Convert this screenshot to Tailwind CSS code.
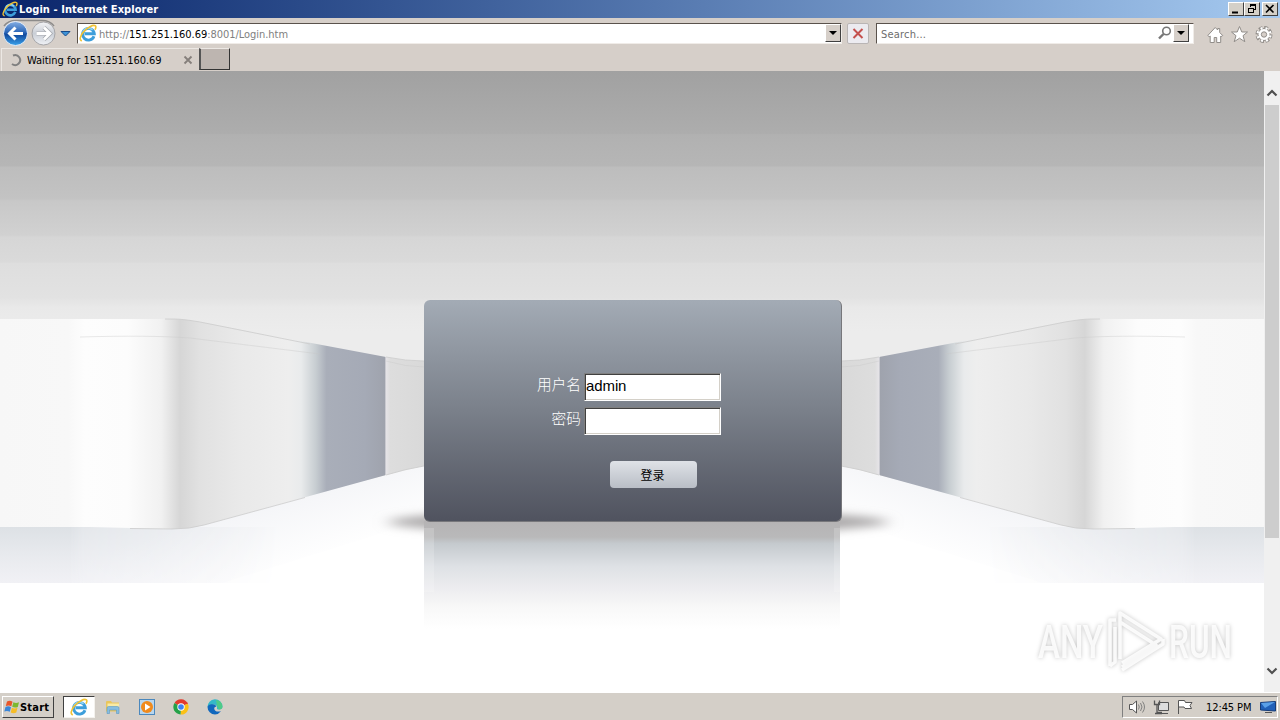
<!DOCTYPE html>
<html lang="zh">
<head>
    <meta charset="UTF-8">
    <meta name="viewport" content="width=device-width, initial-scale=1.0">
    <title>Login</title>
    <script src="https://cdn.jsdelivr.net/npm/@tailwindcss/browser@4"></script>
</head>
<body class="w-[1280px] h-[720px] overflow-hidden flex flex-col bg-[#d4d0c8] text-[11px] leading-none text-black font-['DejaVu_Sans_Condensed','Noto_Sans_CJK_SC',sans-serif]">

    <svg class="hidden">
        <symbol id="ie" viewBox="0 0 16 16">
            <path d="M13.300 10.900A5.200 5.200 0 1 1 13.600 8.700H5" fill="none" stroke="#3d9edb" stroke-width="2.600"/>
            <path d="M3.600 7.200A5 5 0 0 1 12 5.200" fill="none" stroke="#8dd2f5" stroke-width="1.500"/>
            <path d="M2.600 14.800C.2 14.600.6 10.800 4 7S12.400.4 14.400 1.500c1 .7.6 2.200-.2 3.600" fill="none" stroke="#f0c234" stroke-width="1.400"/>
        </symbol>
    </svg>

    <!-- title bar -->
    <header class="h-[18px] shrink-0 flex items-center pl-[2px] pr-[2px] bg-linear-to-r from-[#0a246a] to-[#a6caf0]">
        <svg class="w-4 h-4"><use href="#ie"/></svg>
        <h1 class="ml-px grow text-white font-bold text-[11px] tracking-[0.07px] whitespace-nowrap">Login - Internet Explorer</h1>
        <div class="flex">
            <span class="w-4 h-[14px] bg-[#d4d0c8] border border-t-white border-l-white border-b-[#404040] border-r-[#404040]">
                <svg class="w-[14px] h-3"><path d="M3 8.500h6v2H3z"/></svg>
            </span>
            <span class="w-4 h-[14px] bg-[#d4d0c8] border border-t-white border-l-white border-b-[#404040] border-r-[#404040]">
                <svg class="w-[14px] h-3" shape-rendering="crispEdges" fill="none" stroke="#000"><path d="M5.500 4V1.500h5v5H9M5 2h6M3.500 5.500h5v4h-5zM3 5h6"/></svg>
            </span>
            <span class="ml-[2px] w-4 h-[14px] bg-[#d4d0c8] border border-t-white border-l-white border-b-[#404040] border-r-[#404040]">
                <svg class="w-[14px] h-3" fill="none" stroke="#000" stroke-width="1.600"><path d="M3 2l7.500 7.500M10.500 2L3 9.500"/></svg>
            </span>
        </div>
    </header>

    <!-- address bar -->
    <nav class="h-[30px] shrink-0 flex items-center bg-[#d6cfc9]">
        <svg class="w-[77px] h-[30px] shrink-0">
            <defs>
                <linearGradient id="back" x1="0" y1="0" x2="0" y2="1">
                    <stop offset="0" stop-color="#86afe4"/><stop offset=".45" stop-color="#2b66b8"/><stop offset=".55" stop-color="#124a9e"/><stop offset="1" stop-color="#3ba4ec"/>
                </linearGradient>
                <linearGradient id="fwd" x1="0" y1="0" x2="0" y2="1">
                    <stop offset="0" stop-color="#f4f4f6"/><stop offset=".5" stop-color="#c9ced6"/><stop offset="1" stop-color="#f0f2f6"/>
                </linearGradient>
            </defs>
            <path d="M4 8Q8 2.500 16 2.500H42q8 0 12 5.500" fill="none" stroke="#8d8b8a" stroke-width="1.500"/>
            <circle cx="15.500" cy="15.500" r="12" fill="url(#back)" stroke="#e9eef6"/>
            <circle cx="43.500" cy="15.500" r="11.500" fill="url(#fwd)" stroke="#a5a5a8"/>
            <path d="M23 15.500H10M15.500 9.500l-6 6 6 6" fill="none" stroke="#fff" stroke-width="3"/>
            <path d="M36.500 15.500h13M44 9.500l6 6-6 6" fill="none" stroke="#a5a8ae" stroke-width="4.200"/>
            <path d="M36.500 15.500h13M44 9.500l6 6-6 6" fill="none" stroke="#fff" stroke-width="2.800"/>
            <path d="M61 13.500h9L65.500 18z" fill="#3c93d8" stroke="#164a8a"/>
        </svg>
        <div class="w-[765px] h-[21px] flex items-center bg-white border border-t-[#5a524c] border-l-[#5a524c] border-b-[#f0ece8] border-r-[#f0ece8] pl-px">
            <svg class="w-[18px] h-[18px]"><use href="#ie"/></svg>
            <p class="ml-[2px] grow text-[#808080] tracking-[-0.04px] whitespace-nowrap pt-[2px]">http://<span class="text-black">151.251.160.69</span>:8001/Login.htm</p>
            <span class="w-4 h-[18px] bg-[#d6cfc9] border border-t-white border-l-white border-b-[#404040] border-r-[#404040]">
                <svg class="w-[14px] h-4"><path d="M3 6h8l-4 4z"/></svg>
            </span>
        </div>
        <span class="ml-[5px] w-[22px] h-[21px] rounded-xs border border-[#b9b5b5] bg-[#ecebf0]">
            <svg class="w-5 h-[19px]" fill="none" stroke="#c4504e" stroke-width="2"><path d="M5.500 5l9 9M14.500 5l-9 9"/></svg>
        </span>
        <div class="ml-[7px] w-[318px] h-[21px] flex items-center bg-white border border-t-[#5a524c] border-l-[#5a524c] border-b-[#f0ece8] border-r-[#f0ece8] pl-1 pr-1">
            <p class="grow text-[#6d6d6d] tracking-[0.2px] pt-[2px]">Search...</p>
            <svg class="w-4 h-4" fill="none" stroke="#777"><circle cx="9.500" cy="6" r="3.800" stroke-width="1.600"/><path d="M6.500 9L2 13.500" stroke-width="2.400"/></svg>
            <span class="w-4 h-[18px] bg-[#d6cfc9] border border-t-white border-l-white border-b-[#404040] border-r-[#404040]">
                <svg class="w-[14px] h-4"><path d="M3 6h8l-4 4z"/></svg>
            </span>
        </div>
        <svg class="ml-[10px] w-[74px] h-[30px] shrink-0" fill="#fff" stroke="#918d89">
            <path d="M3.800 17.500l7.400-8 2.500 2.500v-1.500h2v4l3 3-1.500 1-.5-.5v6.500h-4v-5h-2.500v5h-4V18l-1 .7z"/>
            <path d="M35.500 8.500l2.300 5.500h5.700l-4.500 3.700 1.800 6-5.300-3.500-5.300 3.500 1.800-6-4.500-3.700h5.700z"/>
            <g id="gear">
                <circle cx="60" cy="16.500" r="6.700" fill="none" stroke-width="3.600" stroke-dasharray="3.600 1.662"/>
                <circle cx="60" cy="16.500" r="6"/>
                <circle cx="60" cy="16.500" r="6.500" fill="none" stroke="#fff" stroke-width="2.200" stroke-dasharray="2 3.105" stroke-dashoffset="-.8"/>
                <circle cx="60" cy="16.500" r="2.700" fill="#d6cfc9"/>
            </g>
        </svg>
    </nav>

    <!-- tabs -->
    <div class="h-[23px] shrink-0 flex bg-[#d6cfc9]">
        <div class="ml-px w-[198px] flex items-center border-l border-t border-[#ece8e4] pl-[6px]">
            <svg class="w-4 h-4" fill="none" stroke="#808080" stroke-width="2"><path d="M5 3.500A5 5 0 1 1 4 12"/></svg>
            <p class="ml-[3px] grow whitespace-nowrap tracking-[-0.04px]">Waiting for 151.251.160.69</p>
            <svg class="w-[10px] h-[10px] mr-[6px]" fill="none" stroke="#857f7b" stroke-width="1.800"><path d="M1.500 1.500l7 7M8.500 1.500l-7 7"/></svg>
        </div>
        <span class="w-[31px] h-[22px] bg-[#bdb5b0] border border-t-[#ece8e4] border-l-2 border-l-[#555] border-b-[#333] border-r-[#333]"></span>
    </div>

    <main class="h-[621px] shrink-0 flex">
        <div class="relative w-[1264px] h-full bg-white">
            <!-- room backdrop -->
            <svg class="absolute inset-0" width="1264" height="621" viewBox="0 71 1264 621">
                <defs>
                    <linearGradient id="sky" gradientUnits="userSpaceOnUse" x1="0" y1="71" x2="0" y2="331">
                        <stop offset="0" stop-color="#a1a1a1"/><stop offset=".24" stop-color="#adadad"/>
                        <stop offset=".245" stop-color="#b1b1b1"/><stop offset=".365" stop-color="#b6b6b6"/>
                        <stop offset=".37" stop-color="#bdbdbd"/><stop offset=".49" stop-color="#c3c3c3"/>
                        <stop offset=".5" stop-color="#c8c8c8"/><stop offset=".63" stop-color="#d1d1d1"/>
                        <stop offset=".64" stop-color="#d6d6d6"/><stop offset=".735" stop-color="#dadada"/>
                        <stop offset=".74" stop-color="#dedede"/><stop offset=".87" stop-color="#e2e2e2"/>
                        <stop offset=".91" stop-color="#e9e9e9"/><stop offset="1" stop-color="#ececec"/>
                    </linearGradient>
                    <linearGradient id="wall" gradientUnits="userSpaceOnUse" x1="0" y1="0" x2="424" y2="0">
                        <stop offset="0" stop-color="#f7f7f7"/><stop offset=".16" stop-color="#f8f8f8"/>
                        <stop offset=".2" stop-color="#fdfdfd"/><stop offset=".3" stop-color="#fcfcfc"/>
                        <stop offset=".38" stop-color="#f1f1f1"/><stop offset=".425" stop-color="#d6d6d6"/>
                        <stop offset=".47" stop-color="#e1e1e1"/><stop offset=".56" stop-color="#e9e9e9"/>
                        <stop offset=".68" stop-color="#eeeeee"/><stop offset=".71" stop-color="#e9ebec"/>
                        <stop offset=".745" stop-color="#c7cdd1"/><stop offset=".77" stop-color="#a9aeb9"/>
                        <stop offset=".86" stop-color="#a5aab6"/><stop offset=".908" stop-color="#9fa3ad"/>
                        <stop offset=".91" stop-color="#e6e4e8"/><stop offset=".92" stop-color="#dddddd"/>
                        <stop offset="1" stop-color="#d9d9d9"/>
                    </linearGradient>
                    <linearGradient id="floor" gradientUnits="userSpaceOnUse" x1="180" y1="527" x2="205" y2="600">
                        <stop offset="0" stop-color="#f3f4f7"/><stop offset="1" stop-color="#f3f4f7" stop-opacity="0"/>
                    </linearGradient>
                    <linearGradient id="floorEdge" gradientUnits="userSpaceOnUse" x1="0" y1="527" x2="0" y2="583">
                        <stop offset="0" stop-color="#dde1e5"/><stop offset=".5" stop-color="#e8eaee"/><stop offset="1" stop-color="#f1f1f5"/>
                    </linearGradient>
                    <linearGradient id="fade" x1="0" y1="0" x2="1" y2="0">
                        <stop offset="0" stop-color="#fff"/><stop offset=".25" stop-color="#fff"/><stop offset=".3" stop-color="#aaa"/><stop offset="1" stop-color="#000"/>
                    </linearGradient>
                    <mask id="edgeMask" maskUnits="userSpaceOnUse" x="0" y="520" width="280" height="70">
                        <rect x="0" y="520" width="280" height="70" fill="url(#fade)"/>
                    </mask>
                    <linearGradient id="mirror" x1="0" y1="0" x2="0" y2="1">
                        <stop offset="0" stop-color="#b5b3b4"/><stop offset=".15" stop-color="#b9b9ba"/>
                        <stop offset=".21" stop-color="#c5cace"/><stop offset=".42" stop-color="#dee1e5"/>
                        <stop offset=".6" stop-color="#ebebee"/><stop offset=".8" stop-color="#f8f8f8"/><stop offset="1" stop-color="#fff"/>
                    </linearGradient>
                    <filter id="soft" x="-20%" y="-80%" width="140%" height="260%"><feGaussianBlur stdDeviation="8 5"/></filter>
                    <g id="side">
                        <path d="M0 527H180L424 466V520L200 590H0z" fill="url(#floor)"/>
                        <path d="M0 527H280V583H0z" fill="url(#floorEdge)" mask="url(#edgeMask)"/>
                        <path d="M0 583H280V600H0z" fill="#fff"/>
                        <path d="M0 319H174Q183 319 200 322L386 357Q406 361 424 361V466Q405 469 386 475L204 525Q190 529 172 529L90 527H0z" fill="url(#wall)"/>
                        <path d="M165 319H174Q183 319 200 322L310 344M386 357Q406 361 424 361M386 475Q405 469 424 466M305 497.500L204 525Q190 529 172 529L130 528.500" fill="none" stroke="#cbcbcb" stroke-width=".8"/>
                        <path d="M80 337Q150 335 190 338L320 354M386 361Q406 367 424 367" fill="none" stroke="#c9c9c9" stroke-width=".8" opacity=".5"/>
                    </g>
                </defs>
                <rect x="0" y="71" width="1264" height="420" fill="url(#sky)"/>
                <path d="M0 527H180L424 466H842L1084 527H1264V692H0z" fill="#fff"/>
                <use href="#side"/>
                <use href="#side" transform="translate(1265 0) scale(-1 1)"/>
                <ellipse cx="638" cy="522" rx="250" ry="12" fill="#aaa8a9" filter="url(#soft)"/>
                <rect x="424" y="521" width="416" height="108" fill="url(#mirror)"/>
                <path d="M424 528h10v64h-10zM834 528h6v64h-6z" fill="#fff" opacity=".18"/>
            </svg>

            <!-- login panel -->
            <form id="login" class="absolute left-[424px] top-[229px] w-[418px] h-[222px] rounded-md border-r border-b border-[#77777b] bg-linear-to-b from-[#a3abb5] via-[#7a808a] to-[#50535f] pt-[73px] text-white font-['Liberation_Sans','Noto_Sans_CJK_SC',sans-serif]">
                <div class="flex items-center h-7">
                    <label for="user" class="w-[157px] text-right text-[14.7px] font-light pb-[3px]">用户名</label>
                    <input id="user" type="text" value="admin" class="ml-[3px] w-[137px] h-7 pl-px pb-[3px] bg-white text-black text-[15px] tracking-[-0.1px] border border-t-[#808080] border-l-[#808080] border-b-white border-r-white shadow-[inset_1px_1px_#404040,inset_-1px_-1px_#d4d0c8]">
                </div>
                <div class="mt-[6px] flex items-center h-7">
                    <label for="pass" class="w-[157px] text-right text-[14.7px] font-light pb-[3px]">密码</label>
                    <input id="pass" type="password" class="ml-[3px] w-[137px] h-7 bg-white text-black border border-t-[#808080] border-l-[#808080] border-b-white border-r-white shadow-[inset_1px_1px_#404040,inset_-1px_-1px_#d4d0c8]">
                </div>
                <button type="button" class="mt-[26px] ml-[186px] w-[87px] h-[27px] rounded bg-linear-to-b from-[#dfe2e7] to-[#b9bec6] text-black text-xs pr-[2px] pt-[2px]">登录</button>
            </form>

            <!-- watermark -->
            <svg class="absolute left-[1037px] top-[537px] w-[210px] h-[66px] overflow-visible drop-shadow-[0_0_2px_#00000044]">
                <g fill="none" stroke="#fff" stroke-opacity=".85" stroke-width="3.500" stroke-linejoin="round">
                    <path d="M83 51V5L124 31 85 55M83 14L119 37 85 59M73 58V12h6M73 58l5-4V19M85 62L126 36V31"/>
                </g>
                <g fill="#fff" fill-opacity=".85" font-family="Roboto" font-weight="500" font-size="46">
                    <text x="1" y="50" textLength="65" lengthAdjust="spacingAndGlyphs">ANY</text>
                    <text x="132" y="50" textLength="63" lengthAdjust="spacingAndGlyphs">RUN</text>
                </g>
            </svg>
        </div>

        <!-- scrollbar -->
        <div class="w-4 h-full flex flex-col items-center bg-[#f0f0f0] pt-[13px] pb-[13px]">
            <svg class="w-4 h-[21px] shrink-0" fill="none" stroke="#505050" stroke-width="2.200"><path d="M3.500 11.500L8 7l4.500 4.500"/></svg>
            <span class="w-[14px] h-[433px] bg-[#cdcdcd]"></span>
            <svg class="mt-auto w-4 h-4 shrink-0" fill="none" stroke="#505050" stroke-width="2.200"><path d="M3.500 5.500L8 10l4.500-4.500"/></svg>
        </div>
    </main>

    <!-- taskbar -->
    <footer class="h-7 shrink-0 flex items-center bg-[#d4cfc8] border-t border-white pl-[2px] pr-[2px]">
        <button class="w-[52px] h-[22px] flex items-center pl-px border border-t-white border-l-white border-b-[#404040] border-r-[#404040] font-bold text-[11px]">
            <svg class="w-4 h-4 shrink-0">
                <path d="M3 2.500q3-1.500 5.500.2L7.300 7.300Q5 5.800 1.800 7z" fill="#e8562a"/>
                <path d="M9.400 3.200q2.600 1.400 5.600 0L13.800 8q-3 1.200-5.600-.2z" fill="#7cb82f"/>
                <path d="M1.500 8q3-1.400 5.500.2L5.800 12.800q-2.600-1.500-5.500-.3z" fill="#3a86d8"/>
                <path d="M7.900 8.800q2.600 1.400 5.600 0l-1.200 4.800q-3 1.200-5.600-.2z" fill="#f6bd27"/>
            </svg>
            <span class="tracking-[0.2px] pt-px">Start</span>
        </button>
        <span class="ml-[9px] w-8 h-[22px] flex items-center justify-center bg-white border border-t-[#404040] border-l-[#404040] border-b-[#f4f2ee] border-r-[#f4f2ee]">
            <svg class="w-[18px] h-[18px]"><use href="#ie"/></svg>
        </span>
        <svg class="ml-[10px] w-4 h-4">
            <path d="M1 3q0-1 1-1h4l1 1.500h7v9H1z" fill="#e9c65c"/><path d="M2.500 4.500H14V8H2.500z" fill="#f8eaa6"/>
            <path d="M2 14.500V9q0-1.500 1.500-1.500h9Q14 7.500 14 9v5.500h-2.500V11h-7v3.500z" fill="#86bde0" stroke="#5a98c4" stroke-width=".6"/>
        </svg>
        <svg class="ml-[18px] w-4 h-4">
            <rect x=".5" y=".5" width="15" height="15" fill="#b8d6ee" stroke="#4b88bd"/><circle cx="8" cy="8" r="6" fill="#f08a1c"/><path d="M6 4.500v7L11.500 8z" fill="#fff"/>
        </svg>
        <svg class="ml-[18px] w-4 h-4">
            <path d="M8 8L1.500 4A7.500 7.500 0 0 1 14.700 4.500z" fill="#e33b2e"/><path d="M8 8l6.700-3.500A7.500 7.500 0 0 1 7.500 15.500z" fill="#fbc116"/><path d="M8 8l-.5 7.500A7.500 7.500 0 0 1 1.500 4z" fill="#24a148"/>
            <path d="M8 4.300h6.600" stroke="#e33b2e" stroke-width="1.500"/><circle cx="8" cy="8" r="3.700" fill="#fff"/><circle cx="8" cy="8" r="2.800" fill="#3f83f2"/>
        </svg>
        <svg class="ml-[18px] w-4 h-4">
            <path d="M.5 8A7.500 7.500 0 0 1 15.500 7.500q0 3-3.500 3-2.500 0-2-1.800Q10 5.500 6.500 5.500T.5 8z" fill="#35b8c8"/>
            <path d="M.5 8Q1.500 4.800 5.500 5.200q3.500.3 3.800 2.600-2-.4-2.100 1.700.3 4 6.800 2.800Q11.500 15.500 8 15.500A7.500 7.500 0 0 1 .5 8z" fill="#1268bd"/>
            <path d="M9 1q6 .8 6.500 6.500 0 3-3.500 3L10 7z" fill="#56cf78" opacity=".8"/>
        </svg>
        <div class="ml-auto w-[156px] h-[22px] flex items-center border border-t-[#808080] border-l-[#808080] border-b-white border-r-white pl-[6px] pr-px">
            <svg class="w-[66px] h-4" fill="#fff" stroke="#555">
                <path d="M.5 5.500h3l4-3.500v12l-4-3.500h-3z"/><path d="M9.500 5.500q1.500 2.500 0 5M11.500 4q3 4 0 8M13.500 2.500q4 5.500 0 11" fill="none" stroke="#777" stroke-width=".9"/>
                <path d="M29.500 3.500h10v8h-10zM31 14.500h8" fill="#ddd"/><path d="M25.500 1.500v4h5v-4M28 5.500v8h5M26 14.500h7" fill="none" stroke-width="1.300"/>
                <path d="M49.500 15V1.500h6l1 2h6.500l-2 3 1.500 3h-6.500l-1-1.500h-5"/>
            </svg>
            <time class="ml-[11px] grow whitespace-nowrap tracking-[-0.1px] pt-px">12:45 PM</time>
            <svg class="w-4 h-4"><path d="M.5 3.500l15-1v9.500l-15-1z" fill="#2160b8" stroke="#163c78"/><path d="M1 4l14-1L5 9z" fill="#5aa0e8"/><path d="M5 13.500h7" stroke="#555"/></svg>
        </div>
    </footer>

</body>
</html>
